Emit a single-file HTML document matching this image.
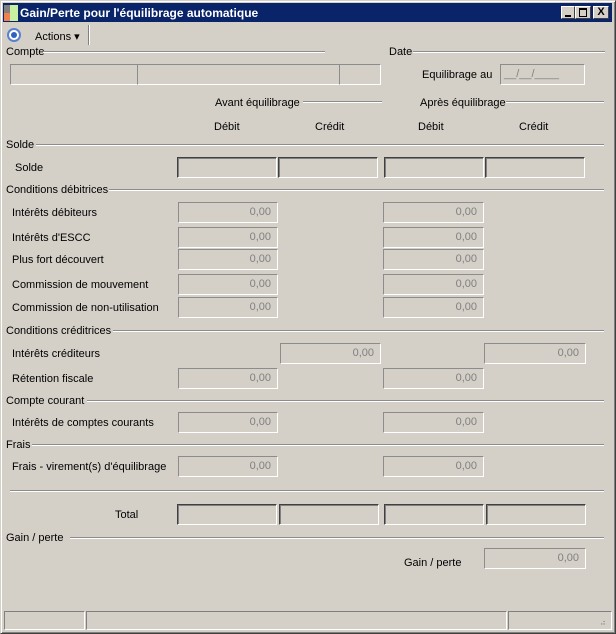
<!DOCTYPE html><html><head><meta charset="utf-8"><style>
body{margin:0;width:616px;height:634px;background:#d4d0c8;font-family:"Liberation Sans",sans-serif;font-size:11px;position:relative;overflow:hidden}
.a{position:absolute;white-space:nowrap}
.t{position:absolute;line-height:12px;color:#000;margin-top:1px;white-space:nowrap}
.d{position:absolute;box-sizing:border-box;height:21px;border:1px solid;border-color:#8c8c8c #fff #fff #8c8c8c;color:#808080;text-align:right;padding-right:6px;line-height:18px}
.k{position:absolute;box-sizing:border-box;height:21px;border:1px solid;border-color:#404040 #fff #fff #404040;box-shadow:inset 1px 1px #808080}
.l{position:absolute;height:1px;background:#8c8c8c;border-bottom:1px solid #fff}
</style></head><body>
<div class="a" style="left:0;top:0;width:614px;height:632px;border:1px solid;border-color:#d4d0c8 #404040 #404040 #d4d0c8;box-shadow:inset 1px 1px #fff,inset -1px -1px #808080"></div>
<div class="a" style="left:3px;top:3px;width:609px;height:19px;background:#0a246a"></div>
<div class="a" style="left:4px;top:5px;width:6px;height:8px;background:#808080"></div>
<div class="a" style="left:4px;top:13px;width:6px;height:8px;background:#f08050"></div>
<div class="a" style="left:10px;top:5px;width:8px;height:16px;background:#c8f0a0"></div>
<div class="t" style="left:20px;top:6px;color:#fff;font-weight:bold;font-size:12px">Gain/Perte pour l'équilibrage automatique</div>
<div class="a" style="left:561px;top:6px;width:14px;height:13px;background:#d4d0c8;border:1px solid;border-color:#fff #404040 #404040 #fff;box-sizing:border-box"><div class="a" style="left:3px;top:8px;width:6px;height:2px;background:#000"></div></div>
<div class="a" style="left:575px;top:6px;width:16px;height:13px;background:#d4d0c8;border:1px solid;border-color:#fff #404040 #404040 #fff;box-sizing:border-box"><div class="a" style="left:3px;top:1px;width:6px;height:6px;border:1px solid #000;border-top-width:2px"></div></div>
<div class="a" style="left:593px;top:6px;width:16px;height:13px;background:#d4d0c8;border:1px solid;border-color:#fff #404040 #404040 #fff;box-sizing:border-box;font-weight:bold;font-size:11px;line-height:10px;text-align:center">X</div>
<div class="a" style="left:7px;top:28px;width:10px;height:10px;border:2px solid #5a80d0;border-radius:50%;background:#fff"></div>
<div class="a" style="left:11px;top:32px;width:6px;height:6px;border-radius:50%;background:#3060c0"></div>
<div class="t" style="left:35px;top:30px">Actions ▾</div>
<div class="a" style="left:88px;top:25px;width:1px;height:20px;background:#808080;border-right:1px solid #fff"></div>

<div class="t" style="left:6px;top:45px">Compte</div><div class="l" style="left:43px;top:51px;width:282px"></div>
<div class="t" style="left:389px;top:45px">Date</div><div class="l" style="left:413px;top:51px;width:192px"></div>
<div class="d" style="left:10px;top:64px;width:128px"></div><div class="d" style="left:137px;top:64px;width:203px"></div><div class="d" style="left:339px;top:64px;width:42px"></div>
<div class="t" style="left:422px;top:68px">Equilibrage au</div>
<div class="d" style="left:500px;top:64px;width:85px;text-align:left;padding-left:3px">__/__/____</div>
<div class="t" style="left:215px;top:96px">Avant équilibrage</div><div class="l" style="left:303px;top:101px;width:79px"></div>
<div class="t" style="left:420px;top:96px">Après équilibrage</div><div class="l" style="left:506px;top:101px;width:98px"></div>
<div class="t" style="left:214px;top:120px">Débit</div><div class="t" style="left:315px;top:120px">Crédit</div><div class="t" style="left:418px;top:120px">Débit</div><div class="t" style="left:519px;top:120px">Crédit</div>

<div class="t" style="left:6px;top:138px">Solde</div><div class="l" style="left:36px;top:144px;width:568px"></div>
<div class="t" style="left:15px;top:161px">Solde</div>
<div class="k" style="left:177px;top:157px;width:100px"></div><div class="k" style="left:278px;top:157px;width:100px"></div><div class="k" style="left:384px;top:157px;width:100px"></div><div class="k" style="left:485px;top:157px;width:100px"></div>

<div class="t" style="left:6px;top:183px">Conditions débitrices</div><div class="l" style="left:109px;top:189px;width:495px"></div>
<div class="t" style="left:12px;top:206px">Intérêts débiteurs</div><div class="d" style="left:178px;top:202px;width:100px">0,00</div><div class="d" style="left:383px;top:202px;width:101px">0,00</div>
<div class="t" style="left:12px;top:231px">Intérêts d'ESCC</div><div class="d" style="left:178px;top:227px;width:100px">0,00</div><div class="d" style="left:383px;top:227px;width:101px">0,00</div>
<div class="t" style="left:12px;top:253px">Plus fort découvert</div><div class="d" style="left:178px;top:249px;width:100px">0,00</div><div class="d" style="left:383px;top:249px;width:101px">0,00</div>
<div class="t" style="left:12px;top:278px">Commission de mouvement</div><div class="d" style="left:178px;top:274px;width:100px">0,00</div><div class="d" style="left:383px;top:274px;width:101px">0,00</div>
<div class="t" style="left:12px;top:301px">Commission de non-utilisation</div><div class="d" style="left:178px;top:297px;width:100px">0,00</div><div class="d" style="left:383px;top:297px;width:101px">0,00</div>

<div class="t" style="left:6px;top:324px">Conditions créditrices</div><div class="l" style="left:113px;top:330px;width:491px"></div>
<div class="t" style="left:12px;top:347px">Intérêts créditeurs</div><div class="d" style="left:280px;top:343px;width:101px">0,00</div><div class="d" style="left:484px;top:343px;width:102px">0,00</div>
<div class="t" style="left:12px;top:372px">Rétention fiscale</div><div class="d" style="left:178px;top:368px;width:100px">0,00</div><div class="d" style="left:383px;top:368px;width:101px">0,00</div>

<div class="t" style="left:6px;top:394px">Compte courant</div><div class="l" style="left:87px;top:400px;width:517px"></div>
<div class="t" style="left:12px;top:416px">Intérêts de comptes courants</div><div class="d" style="left:178px;top:412px;width:100px">0,00</div><div class="d" style="left:383px;top:412px;width:101px">0,00</div>

<div class="t" style="left:6px;top:438px">Frais</div><div class="l" style="left:32px;top:444px;width:572px"></div>
<div class="t" style="left:12px;top:460px">Frais - virement(s) d'équilibrage</div><div class="d" style="left:178px;top:456px;width:100px">0,00</div><div class="d" style="left:383px;top:456px;width:101px">0,00</div>

<div class="l" style="left:10px;top:490px;width:594px"></div>
<div class="t" style="left:115px;top:508px">Total</div>
<div class="k" style="left:177px;top:504px;width:100px"></div><div class="k" style="left:279px;top:504px;width:100px"></div><div class="k" style="left:384px;top:504px;width:100px"></div><div class="k" style="left:486px;top:504px;width:100px"></div>

<div class="t" style="left:6px;top:531px">Gain / perte</div><div class="l" style="left:70px;top:537px;width:534px"></div>
<div class="t" style="left:404px;top:556px">Gain / perte</div><div class="d" style="left:484px;top:548px;width:102px">0,00</div>

<div class="a" style="left:4px;top:611px;width:81px;height:19px;border:1px solid;border-color:#808080 #fff #fff #808080;box-sizing:border-box"></div>
<div class="a" style="left:86px;top:611px;width:421px;height:19px;border:1px solid;border-color:#808080 #fff #fff #808080;box-sizing:border-box"></div>
<div class="a" style="left:508px;top:611px;width:104px;height:19px;border:1px solid;border-color:#808080 #fff #fff #808080;box-sizing:border-box"></div>
<div class="t" style="left:600px;top:616px;color:#808080;font-size:8px">⠴</div>
</body></html>
